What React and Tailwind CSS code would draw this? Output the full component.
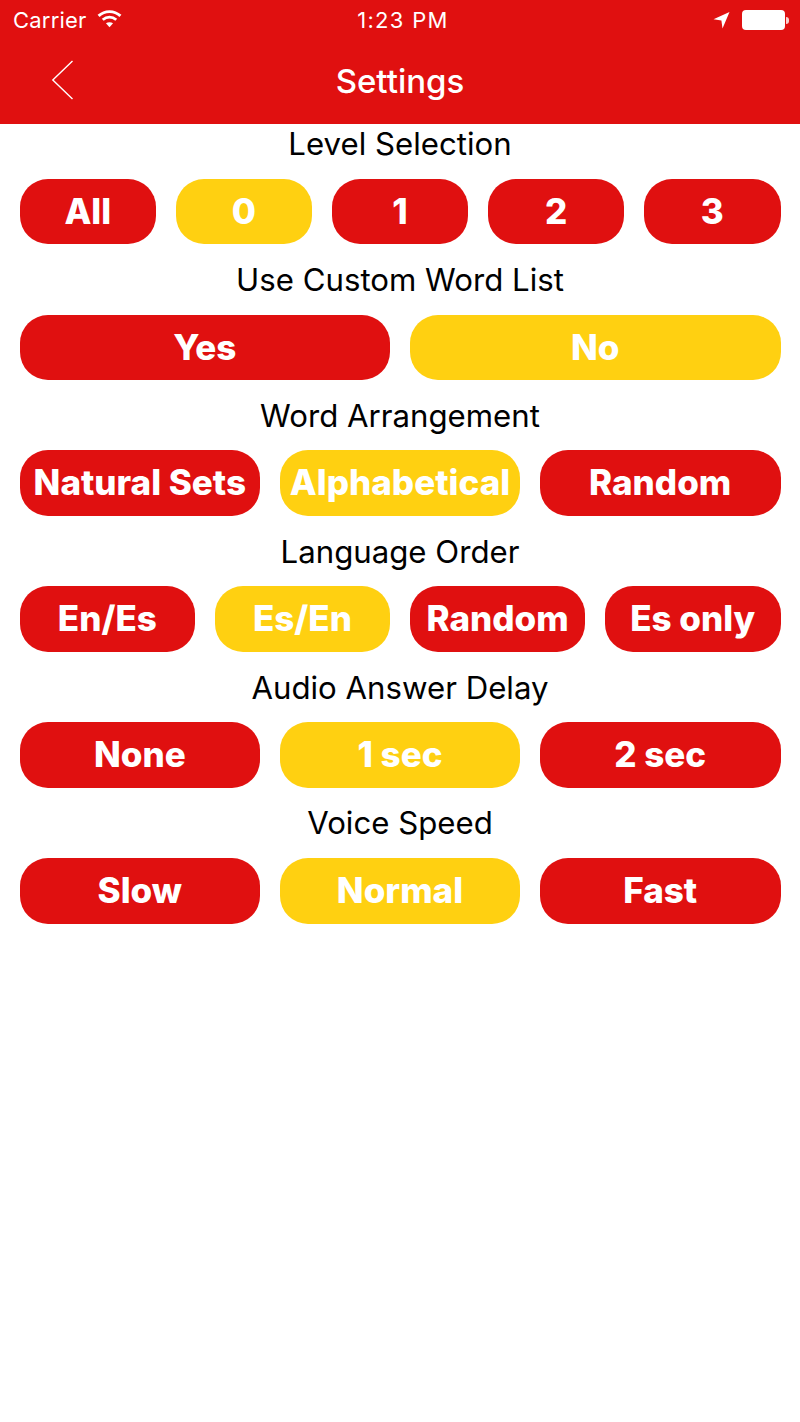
import React from 'react'

const RED = 'bg-[#e01010]'
const YELLOW = 'bg-[#ffd011]'

const sections = [
  { title: 'Level Selection', cols: 'grid-cols-5', options: ['All', '0', '1', '2', '3'], active: 1 },
  { title: 'Use Custom Word List', cols: 'grid-cols-2', options: ['Yes', 'No'], active: 1 },
  { title: 'Word Arrangement', cols: 'grid-cols-3', options: ['Natural Sets', 'Alphabetical', 'Random'], active: 1 },
  { title: 'Language Order', cols: 'grid-cols-4', options: ['En/Es', 'Es/En', 'Random', 'Es only'], active: 1 },
  { title: 'Audio Answer Delay', cols: 'grid-cols-3', options: ['None', '1 sec', '2 sec'], active: 1 },
  { title: 'Voice Speed', cols: 'grid-cols-3', options: ['Slow', 'Normal', 'Fast'], active: 1 },
]

function StatusBar() {
  return (
    <div className="relative flex h-10 items-center justify-between pl-[13px] pr-[11px] text-[22px] tracking-[0.2px] text-white">
      <div className="flex items-center gap-[10px]">
        <span>Carrier</span>
        <svg width="25" height="19" viewBox="0 0 24 18" fill="none" stroke="#fff" strokeWidth="2.8" className="-mt-1">
          <path d="M1.5 6.5C7.5 1 16.5 1 22.5 6.5" />
          <path d="M5.5 10.2C9.5 6.8 14.5 6.8 18.5 10.2" />
          <path d="M12 17.5L8.6 13.6C10.6 12.2 13.4 12.2 15.4 13.6Z" fill="#fff" stroke="none" />
        </svg>
      </div>
      <span className="absolute left-[6px] right-0 text-center tracking-[1.3px]">1:23 PM</span>
      <div className="flex items-center gap-[12px]">
        <svg width="17" height="18" viewBox="0 0 17 18" fill="#fff">
          <path d="M16.5 1L9.5 17.5L8.4 9.4L0.5 8.2Z" />
        </svg>
        <div className="flex items-center gap-px">
          <div className="h-[20px] w-[43px] rounded-[4px] border border-white/60 bg-white" />
          <div className="h-[7px] w-[3px] rounded-r-sm bg-white/80" />
        </div>
      </div>
    </div>
  )
}

export default function App() {
  return (
    <div className="min-h-[1422px] bg-white font-['Inter',sans-serif]">
      {/* Header */}
      <div className={`relative h-[124px] ${RED}`}>
        <StatusBar />
        <div className="relative flex h-[84px] items-center justify-center">
          <svg width="24" height="40" viewBox="0 0 24 40" fill="none" stroke="#fff" strokeWidth="1.4" className="absolute left-[51px] top-[20px]">
            <path d="M21.5 1L1.8 20L21.5 39" />
          </svg>
          <h1 className="text-[33px] font-medium text-white">Settings</h1>
        </div>
      </div>

      <div className="flex flex-col gap-[15.7px] px-[19.5px]">
        {sections.map(s => (
          <div key={s.title}>
            <p className="mb-[14.7px] h-10 text-center text-[31.2px] leading-10 text-black">{s.title}</p>
            <div className={`grid gap-[19.5px] ${s.cols}`}>
              {s.options.map((o, i) => (
                <div
                  key={o}
                  className={`flex h-[65.5px] items-center justify-center rounded-[28px] pb-px text-[35px] font-extrabold text-white ${i === s.active ? YELLOW : RED}`}
                >
                  {o}
                </div>
              ))}
            </div>
          </div>
        ))}
      </div>
    </div>
  )
}
